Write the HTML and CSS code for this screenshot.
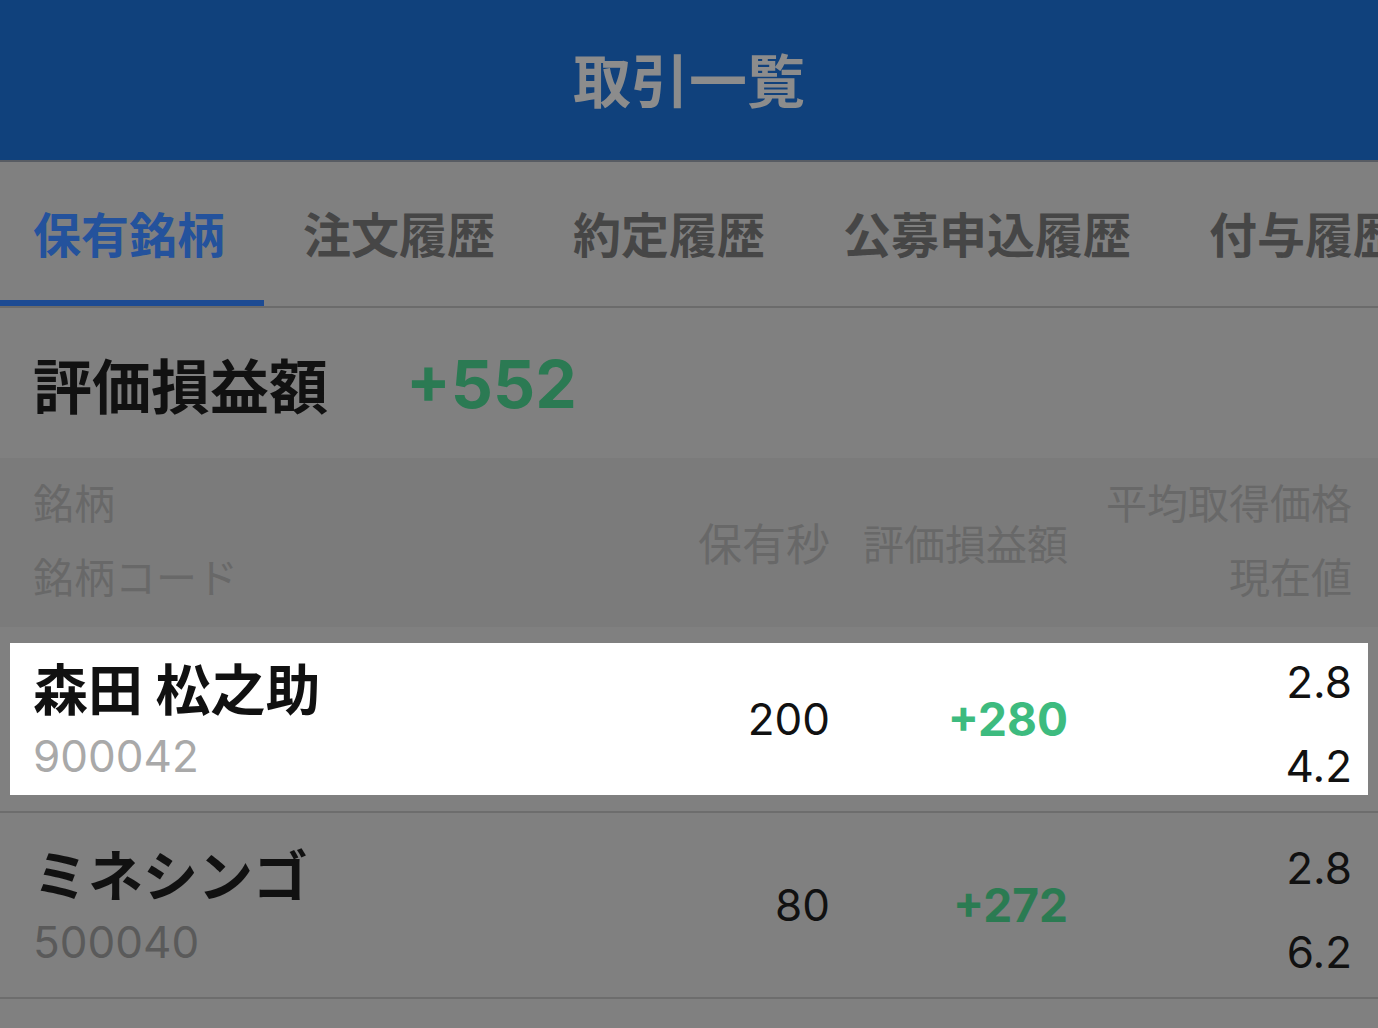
FILE: index.html
```
<!DOCTYPE html>
<html lang="ja">
<head>
    <meta charset="UTF-8">
    <meta name="viewport" content="width=device-width, initial-scale=1.0">
    <title>取引一覧</title>
    <link rel="stylesheet" href="styles.css">
</head>
<body>
    <header class="app-header">
        <h1>取引一覧</h1>
    </header>

    <!-- タブ -->
    <nav class="tabs">
        <div class="tab active">保有銘柄</div>
        <div class="tab">注文履歴</div>
        <div class="tab">約定履歴</div>
        <div class="tab">公募申込履歴</div>
        <div class="tab">付与履歴</div>
    </nav>

    <!-- 合計 -->
    <section class="summary">
        <span class="summary-label">評価損益額</span>
        <span class="summary-value">+552</span>
    </section>

    <!-- 一覧 -->
    <div class="list-head">
        <div class="col-name">
            <div>銘柄</div>
            <div>銘柄コード</div>
        </div>
        <div class="col-qty">保有秒</div>
        <div class="col-pl">評価損益額</div>
        <div class="col-price">
            <div>平均取得価格</div>
            <div>現在値</div>
        </div>
    </div>

    <div class="row">
        <div class="cells spot">
            <div class="col-name">
                <div class="name">森田 松之助</div>
                <div class="code">900042</div>
            </div>
            <div class="col-qty">200</div>
            <div class="col-pl plus">+280</div>
            <div class="col-price">
                <div>2.8</div>
                <div>4.2</div>
            </div>
        </div>
    </div>

    <div class="row">
        <div class="cells">
            <div class="col-name">
                <div class="name">ミネシンゴ</div>
                <div class="code">500040</div>
            </div>
            <div class="col-qty">80</div>
            <div class="col-pl plus">+272</div>
            <div class="col-price">
                <div>2.8</div>
                <div>6.2</div>
            </div>
        </div>
    </div>
</body>
</html>
```

FILE: styles.css
```
/* 全体 */
body {
    margin: 0;
    background-color: #808080;
    font-family: "Inter", "Noto Sans CJK JP", sans-serif;
    color: #111;
    overflow: hidden;
}

/* ヘッダー */
.app-header {
    height: 162px;
    box-sizing: border-box;
    padding-bottom: 5px;
    background-color: #10417c;
    border-bottom: 2px solid #585c63;
    display: flex;
    align-items: center;
    justify-content: center;
}

.app-header h1 {
    margin: 0;
    font-family: "Noto Sans CJK JP", sans-serif;
    font-size: 58px;
    font-weight: 700;
    color: #8c8c8c;
}

/* タブ */
.tabs {
    display: flex;
    height: 144px;
    margin-left: -6px;
    border-bottom: 2px solid #6b6b6b;
    white-space: nowrap;
    overflow: hidden;
}

.tab {
    flex-shrink: 0;
    box-sizing: border-box;
    height: 146px;
    padding: 2px 39px 0;
    margin-bottom: -2px;
    border-bottom: 8px solid transparent;
    display: flex;
    align-items: center;
    font-family: "Noto Sans CJK JP", sans-serif;
    font-size: 48px;
    font-weight: 700;
    color: #464646;
}

.tab.active {
    color: #24529c;
    border-bottom-color: #1d4b93;
}

/* 合計 */
.summary {
    height: 150px;
    display: flex;
    align-items: center;
    gap: 78px;
    padding-left: 33px;
}

.summary-label {
    font-family: "Noto Sans CJK JP", sans-serif;
    font-size: 59px;
    font-weight: 700;
    color: #111;
}

.summary-value {
    font-size: 66px;
    font-weight: 700;
    color: #2b7a53;
    padding-top: 2px;
}

/* 列 */
.list-head, .cells {
    display: grid;
    grid-template-columns: 1fr 160px 238px 284px;
    align-items: center;
}

.col-qty, .col-pl, .col-price {
    text-align: right;
}

/* 一覧ヘッダー */
.list-head {
    height: 169px;
    box-sizing: border-box;
    padding: 0 26px 0 33px;
    background-color: #7b7b7b;
    font-family: "Noto Sans CJK JP", sans-serif;
    font-size: 41px;
    color: #686868;
    line-height: 74px;
}

.list-head .col-name, .list-head .col-price {
    align-self: start;
    padding-top: 6px;
}

.list-head .col-qty, .list-head .col-pl {
    padding-bottom: 2px;
}

/* 行 */
.row {
    padding: 16px 10px;
    border-bottom: 2px solid #6d6d6d;
}

.cells {
    height: 152px;
    padding: 0 16px 0 23px;
}

.cells.spot {
    background-color: #fff;
}

.cells .col-name {
    align-self: start;
    padding-top: 8px;
    line-height: 70px;
}

.name {
    font-family: "Noto Sans CJK JP", sans-serif;
    font-size: 55px;
    font-weight: 700;
    color: #111;
}

.code {
    font-size: 44px;
    color: #5a5a5a;
}

.spot .code {
    color: #a9a9a9;
}

.cells .col-qty, .cells .col-pl {
    padding-bottom: 14px;
}

.col-qty {
    font-size: 44px;
}

.plus {
    font-size: 46px;
    font-weight: 700;
    color: #2b7b52;
}

.spot .plus {
    color: #3dbb7f;
}

.cells .col-price {
    align-self: start;
    margin-top: -3px;
    font-size: 44px;
    line-height: 84px;
}
```
